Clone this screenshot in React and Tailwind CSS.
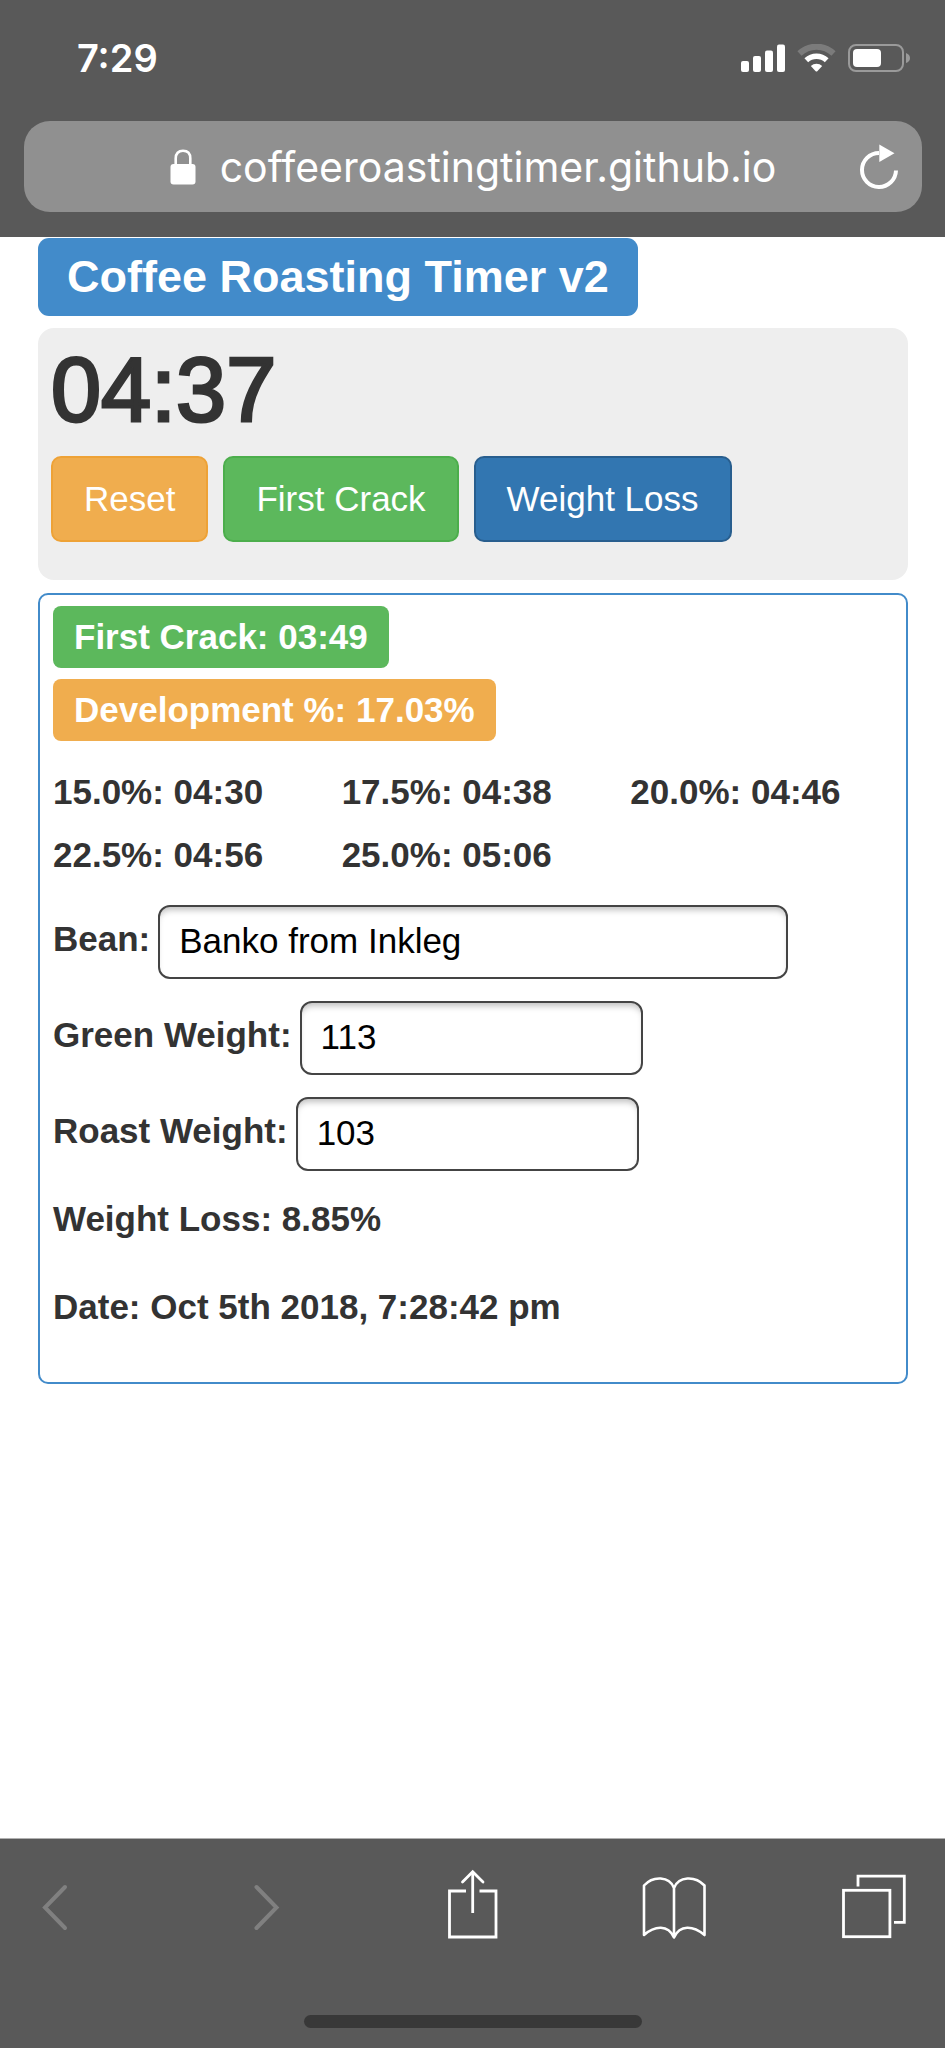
import { useState } from "react";

const STATS = [
  "15.0%: 04:30",
  "17.5%: 04:38",
  "20.0%: 04:46",
  "22.5%: 04:56",
  "25.0%: 05:06",
];

function StatusBar() {
  return (
    <div className="flex items-center justify-between pt-8 pr-[35px] pl-[77px] text-white">
      <time className="font-['Inter',sans-serif] text-[38px] leading-[52px] font-semibold">7:29</time>
      <div className="flex items-center gap-3">
        <svg width="44" height="28" viewBox="0 0 44 28" fill="#fff" role="img" aria-label="Signal">
          <rect x="0" y="17" width="8" height="11" rx="2" />
          <rect x="12" y="12" width="8" height="16" rx="2" />
          <rect x="24" y="6.500" width="8" height="21.500" rx="2" />
          <rect x="36" y="0.500" width="8" height="27.500" rx="2" />
        </svg>
        <svg width="39" height="28" viewBox="0 0 39 28" fill="none" role="img" aria-label="Wi-Fi">
          <path d="M2.500 9.500A24.500 24.500 0 0 1 36.500 9.500" stroke="#7b7b7b" strokeWidth="6" />
          <path d="M9.300 16.200A15 15 0 0 1 29.700 16.200" stroke="#fff" strokeWidth="5.500" />
          <path d="M13.800 22A8.500 8.500 0 0 1 25.200 22L20.300 27.200Q19.500 28 18.700 27.200Z" fill="#fff" />
        </svg>
        <svg width="62" height="28" viewBox="0 0 62 28" fill="none" role="img" aria-label="Battery">
          <rect x="1" y="1" width="54" height="26" rx="7" stroke="#9a9a9a" strokeWidth="2" />
          <rect x="5" y="5" width="28" height="18" rx="4" fill="#fff" />
          <path d="M58 9Q62 10.500 62 14T58 19Z" fill="#9a9a9a" />
        </svg>
      </div>
    </div>
  );
}

function AddressBar() {
  return (
    <div className="mt-[37px] mr-[23px] ml-6 flex h-[91px] items-center justify-between rounded-[26px] bg-[#909090] px-6 text-white">
      <span className="w-[38px]" />
      <button type="button" className="flex items-center gap-6">
        <svg width="26" height="36" viewBox="0 0 26 36" fill="none" aria-hidden="true">
          <path d="M5.700 16V9.500C5.700 4.500 8.500 1.800 13 1.800S20.300 4.500 20.300 9.500V16" stroke="#fff" strokeWidth="2.600" />
          <rect x="0.500" y="15" width="25" height="20.500" rx="3" fill="#fff" />
        </svg>
        <span className="font-['Inter',sans-serif] text-[41px] leading-[56px]">coffeeroastingtimer.github.io</span>
      </button>
      <button type="button" aria-label="Reload">
        <svg width="38" height="46" viewBox="0 0 38 46" fill="none" aria-hidden="true">
          <path d="M19 9A17 17 0 1 0 36 26.500" stroke="#fff" strokeWidth="4" />
          <path d="M19.300 0.500L34.500 9.200L19.300 18Z" fill="#fff" />
        </svg>
      </button>
    </div>
  );
}

function Field({ id, label, value, onChange, width }) {
  return (
    <div className="flex items-center gap-2">
      <label htmlFor={id} className="shrink-0 pb-1.5">{label}</label>
      <input
        id={id}
        type="text"
        value={value}
        onChange={(e) => onChange(e.target.value)}
        className={`h-[74px] min-w-0 rounded-xl border-2 border-[#444] bg-white px-[19px] pb-0.5 font-normal text-black shadow-[inset_0_6px_6px_-3px_rgba(0,0,0,0.25)] outline-none ${width}`}
      />
    </div>
  );
}

function Toolbar() {
  const icon = { width: 64, height: 70, viewBox: "0 0 64 70", fill: "none", "aria-hidden": true };
  return (
    <nav className="flex justify-between pt-[30px] pr-[39px] pl-[41px]">
      <button type="button" aria-label="Back">
        <svg {...icon} stroke="#808080" strokeWidth="4" strokeLinecap="round">
          <path d="M24 18L4 38.500L24 59" />
        </svg>
      </button>
      <button type="button" aria-label="Forward">
        <svg {...icon} stroke="#808080" strokeWidth="4" strokeLinecap="round">
          <path d="M15.500 18L35.500 38.500L15.500 59" />
        </svg>
      </button>
      <button type="button" aria-label="Share">
        <svg {...icon} stroke="#fff" strokeWidth="2.800">
          <path d="M24 22H7.500V68H54V22H37.500" />
          <path d="M30.700 44V3" />
          <path d="M20.500 13L30.700 2.800L41 13" strokeLinecap="round" />
        </svg>
      </button>
      <button type="button" aria-label="Bookmarks">
        <svg {...icon} stroke="#fff" strokeWidth="2.600" strokeLinejoin="round">
          <path d="M32 19C27.500 7 11 6.500 2 16.500V66C13 56.500 26 55.500 32 68.500C38 55.500 51 56.500 62.500 66V16.500C53 6.500 36.500 7 32 19V68.500" />
        </svg>
      </button>
      <button type="button" aria-label="Tabs">
        <svg {...icon} stroke="#fff" strokeWidth="2.800">
          <rect x="1.500" y="21.300" width="46.400" height="46.400" />
          <path d="M16 17.500V7.200H62.300V53.300H52" />
        </svg>
      </button>
    </nav>
  );
}

export default function App() {
  const [bean, setBean] = useState("Banko from Inkleg");
  const [green, setGreen] = useState("113");
  const [roast, setRoast] = useState("103");

  return (
    <div className="flex min-h-screen flex-col bg-white font-['Liberation_Sans',Arial,sans-serif] text-[35px] text-[#333]">
      <header className="bg-[#595959] pb-[25px]">
        <StatusBar />
        <AddressBar />
      </header>

      <main className="flex flex-1 flex-col items-start pt-px pr-[37px] pl-[38px]">
        <h1 className="rounded-[11px] bg-[#428bca] px-[29px] text-[45px] leading-[78px] font-bold text-white">
          Coffee Roasting Timer v2
        </h1>

        <section className="mt-3 w-full rounded-2xl bg-[#eee] px-[13px] pt-3 pb-[38px]">
          <div className="text-[90px] leading-[100px] [-webkit-text-stroke:3px_#333]">04:37</div>
          <div className="mt-4 flex gap-[15px] text-white">
            <button type="button" className="h-[86px] rounded-[10px] border-2 border-[#eea236] bg-[#f0ad4e] px-[31px]">Reset</button>
            <button type="button" className="h-[86px] rounded-[10px] border-2 border-[#4cae4c] bg-[#5cb85c] px-[31px]">First Crack</button>
            <button type="button" className="h-[86px] rounded-[10px] border-2 border-[#285e8e] bg-[#3276b1] px-[31px]">Weight Loss</button>
          </div>
        </section>

        <section className="mt-[13px] flex w-full flex-col items-start rounded-[10px] border-2 border-[#428bca] pt-[11px] pb-[50px] font-bold">
          <div className="ml-[13px] rounded-lg bg-[#5cb85c] px-[21px] leading-[62px] text-white">First Crack: 03:49</div>
          <div className="mt-[11px] ml-[13px] rounded-lg bg-[#f0ad4e] px-[21px] leading-[62px] text-white">Development %: 17.03%</div>

          <ul className="mt-[19px] grid w-full grid-cols-3 leading-[63px]">
            {STATS.map((s) => (
              <li key={s} className="pl-[13px]">{s}</li>
            ))}
          </ul>

          <div className="mt-[19px] flex w-full flex-col gap-[22px] px-[13px]">
            <Field id="bean" label="Bean:" value={bean} onChange={setBean} width="w-[630px]" />
            <Field id="green" label="Green Weight:" value={green} onChange={setGreen} width="w-[343px]" />
            <Field id="roast" label="Roast Weight:" value={roast} onChange={setRoast} width="w-[343px]" />
          </div>

          <p className="mt-[23px] px-[13px] leading-[50px]">Weight Loss: 8.85%</p>
          <p className="mt-[38px] px-[13px] leading-[50px]">Date: Oct 5th 2018, 7:28:42 pm</p>
        </section>
      </main>

      <footer className="border-t border-[#b0b0b0] bg-[#595959] pb-5">
        <Toolbar />
        <div className="mx-auto mt-[76px] h-[13px] w-[338px] rounded-full bg-[#383838]" />
      </footer>
    </div>
  );
}
